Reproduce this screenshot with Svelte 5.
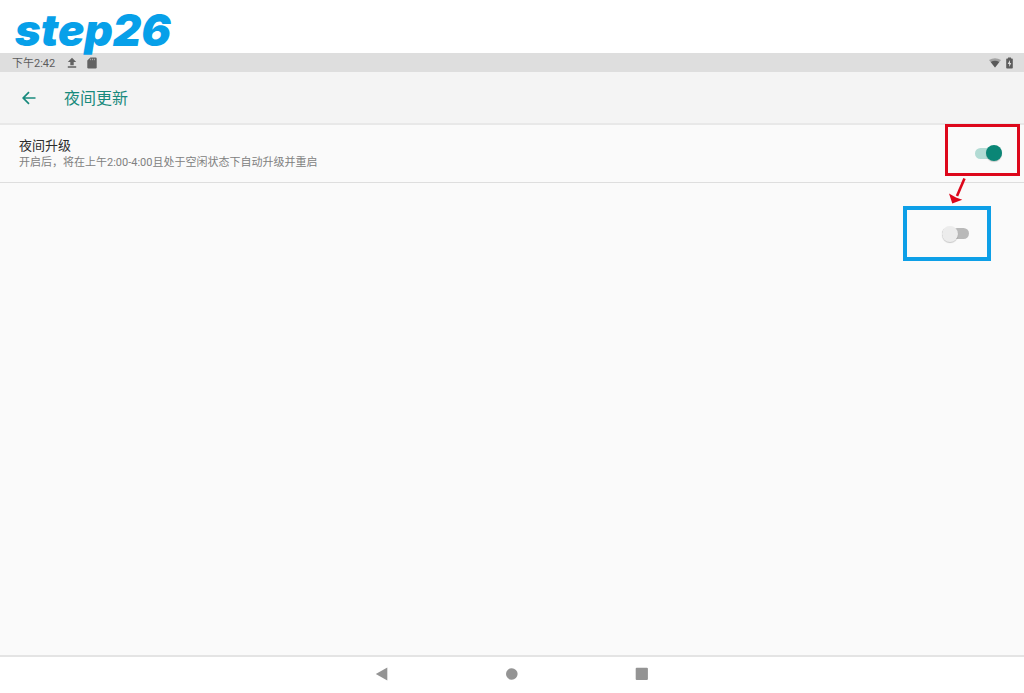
<script>
  let nightUpgrade = $state(true);
  let nightUpgradeOff = $state(false);
</script>

<div class="page">
  <h1 class="step">step26</h1>

  <div class="status">
    <div class="group">
      <span class="time">下午2:42</span>
      <svg class="upload" width="10" height="12" viewBox="0 0 10 12" aria-hidden="true">
        <path d="M5 .8 9.2 5H6.7V8.3H3.3V5H.8ZM.8 9.2H9.2V10.8H.8Z" fill="#626262" />
      </svg>
      <svg width="10" height="12" viewBox="0 0 10 12" aria-hidden="true">
        <path d="M3.4 .5H8.5Q9.7 .5 9.7 1.7V10.3Q9.7 11.5 8.5 11.5H1.5Q.3 11.5 .3 10.3V3.6Z" fill="#626262" />
        <path d="M3.6 1.7V3.2M5.5 1.7V3.2M7.4 1.7V3.2" stroke="#b4b4b4" stroke-width=".9" />
      </svg>
    </div>
    <div class="group right">
      <svg width="12" height="10" viewBox="0 0 12 10" aria-hidden="true">
        <path d="M0 2Q6-1.6 12 2L6 9.6Z" fill="#a2a2a2" />
        <path d="M1.7 4.1Q6 1.2 10.3 4.1L6 9.6Z" fill="#595959" />
      </svg>
      <svg width="7" height="12" viewBox="0 0 7 12" aria-hidden="true">
        <path d="M2 .5H5V1.5H6Q6.8 1.5 6.8 2.3V10.7Q6.8 11.5 6 11.5H1Q.2 11.5 .2 10.7V2.3Q.2 1.5 1 1.5H2Z" fill="#5c5c5c" />
        <path d="M4 3 1.7 7H3.2V10L5.3 6H4Z" fill="#dedede" />
      </svg>
    </div>
  </div>

  <header class="toolbar">
    <button class="back" aria-label="返回">
      <svg width="14" height="14" viewBox="0 0 14 14" aria-hidden="true">
        <path d="M13.5 7H1.5M7 1.2 1.2 7 7 12.8" fill="none" stroke="#188a7d" stroke-width="1.7" />
      </svg>
    </button>
    <h2>夜间更新</h2>
  </header>

  <main>
    <div class="row">
      <label for="night">
        <span class="name">夜间升级</span>
        <span class="desc">开启后，将在上午2:00-4:00且处于空闲状态下自动升级并重启</span>
      </label>
      <input id="night" class="switch" type="checkbox" role="switch" bind:checked={nightUpgrade} />
    </div>
    <div class="mark red"></div>
    <svg class="arrow" width="18" height="27" viewBox="0 0 18 27" aria-hidden="true">
      <path d="M16.5 .5 9 18" stroke="#dd071b" stroke-width="2.6" fill="none" />
      <path d="M1 15.5 4.3 25.5 14.3 21.8 8 19.4Z" fill="#dd071b" />
    </svg>
    <div class="mark blue">
      <input class="switch" type="checkbox" role="switch" aria-label="夜间升级" bind:checked={nightUpgradeOff} />
    </div>
  </main>

  <nav>
    <button aria-label="后退">
      <svg width="14" height="14" viewBox="0 0 14 14"><path d="M12.3 .5V13.5L.8 7Z" fill="#949494" /></svg>
    </button>
    <button aria-label="主页">
      <svg width="14" height="14" viewBox="0 0 14 14"><circle cx="6.8" cy="7" r="5.8" fill="#949494" /></svg>
    </button>
    <button aria-label="最近">
      <svg width="14" height="14" viewBox="0 0 14 14"><rect x=".7" y=".8" width="12.2" height="12.2" rx="1" fill="#949494" /></svg>
    </button>
  </nav>
</div>

<style>
  :global(body) {
    margin: 0;
    background: #fff;
  }
  .page {
    display: flex;
    flex-direction: column;
    min-height: 100vh;
    font-family: Roboto, "Noto Sans CJK SC", sans-serif;
  }
  .page * {
    box-sizing: border-box;
  }
  h1,
  h2 {
    margin: 0;
  }
  svg {
    display: block;
  }
  .step {
    position: relative;
    z-index: 1;
    height: 53px;
    padding-left: 15px;
    font: italic 900 44px/60px Inter, sans-serif;
    color: #07a0e9;
  }
  .status {
    display: flex;
    justify-content: space-between;
    align-items: center;
    height: 19px;
    padding: 0 11px 0 12px;
    background: #dedede;
  }
  .group {
    display: flex;
    align-items: center;
    gap: 10px;
  }
  .right {
    gap: 5px;
  }
  .time {
    padding-top: 2px;
    font-size: 11px;
    line-height: 17px;
    color: #5c5c5c;
  }
  .upload {
    margin-left: 2px;
  }
  .toolbar {
    display: flex;
    align-items: center;
    gap: 20px;
    height: 53px;
    padding-left: 14px;
    background: #f4f4f4;
    border-bottom: 2px solid #e8e8e8;
  }
  button {
    display: grid;
    place-items: center;
    padding: 0;
    border: 0;
    background: none;
    cursor: pointer;
  }
  .back {
    width: 30px;
    height: 30px;
  }
  h2 {
    padding-top: 2px;
    font-size: 16px;
    font-weight: 400;
    line-height: 24px;
    color: #188a7d;
  }
  main {
    position: relative;
    flex: 1;
    background: #fafafa;
  }
  .row {
    display: flex;
    align-items: flex-start;
    justify-content: space-between;
    height: 58px;
    padding: 12px 22px 12px 19px;
    border-bottom: 1px solid #dedede;
  }
  .name,
  .desc {
    display: block;
    line-height: 17px;
  }
  .name {
    font-size: 13px;
    color: #2c2c2c;
  }
  .desc {
    font-size: 11px;
    color: #808080;
  }
  .switch {
    appearance: none;
    position: relative;
    display: flex;
    align-items: center;
    flex: none;
    width: 27px;
    height: 16px;
    margin: 0;
    cursor: pointer;
  }
  .row .switch {
    margin-top: 8px;
  }
  .switch::before {
    content: "";
    flex: 1;
    height: 11px;
    border-radius: 6px;
    background: #b9b9b9;
  }
  .switch::after {
    content: "";
    position: absolute;
    left: 0;
    width: 16px;
    height: 16px;
    border-radius: 50%;
    background: #ececec;
    box-shadow: 0 1px 1px #0003;
  }
  .switch:checked::before {
    background: #b2dbd4;
  }
  .switch:checked::after {
    left: auto;
    right: 0;
    background: #0a8676;
  }
  .mark {
    position: absolute;
  }
  .red {
    top: -1px;
    right: 4px;
    width: 75px;
    height: 52px;
    border: 3px solid #dd071b;
    pointer-events: none;
  }
  .arrow {
    position: absolute;
    top: 53px;
    right: 58px;
  }
  .blue {
    display: flex;
    align-items: center;
    justify-content: flex-end;
    top: 81px;
    right: 33px;
    width: 88px;
    height: 55px;
    padding-right: 18px;
    border: 4px solid #0d9fe7;
  }
  nav {
    display: flex;
    justify-content: center;
    gap: 86px;
    height: 38px;
    padding-bottom: 2px;
    border-top: 2px solid #e4e4e4;
    background: #fff;
  }
  nav button {
    width: 44px;
  }
</style>
